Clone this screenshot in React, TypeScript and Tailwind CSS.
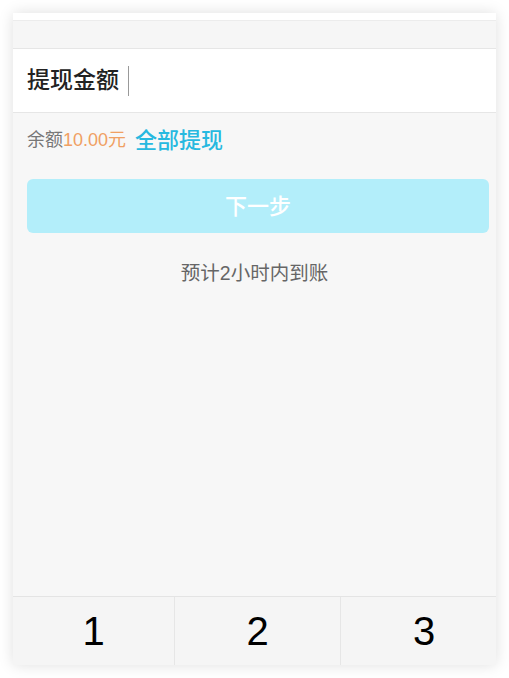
import React from 'react'

const font = { fontFamily: '"Liberation Sans", "Noto Sans CJK SC", sans-serif' }

function Key({ label, className }: { label: string; className: string }) {
  return (
    <div className={`flex h-full shrink-0 items-center justify-center bg-[#f5f5f5] text-[40px] text-black ${className}`}>
      {label}
    </div>
  )
}

export default function App() {
  return (
    <div className="h-[678px] w-full bg-white pl-[13px] pt-[13px]" style={font}>
      <div className="flex h-[652px] w-[483px] flex-col overflow-hidden bg-[#f7f7f7] shadow-[0_0_14px_rgba(0,0,0,0.13)]">
        <div className="h-[7px] bg-white" />
        <div className="h-[28px] border-t border-[#ececec] bg-[#f6f6f6]" />
        <div className="flex h-[65px] items-center border-y border-[#e6e6e6] bg-white px-[14px]">
          <span className="text-[23px] font-medium text-[#222]">提现金额</span>
          <span className="ml-[9px] h-[30px] w-px bg-[#999]" />
        </div>

        <div className="flex h-[54px] items-center px-[14px]">
          <span className="text-[18px] text-[#777]">余额</span>
          <span className="text-[18px] text-[#f0a063]">10.00元</span>
          <span className="ml-[9px] text-[22px] font-medium text-[#27b9e0]">全部提现</span>
        </div>

        <button className="ml-[14px] mr-[7px] mt-[12px] flex h-[54px] items-center justify-center rounded-[6px] bg-[#b3eefa] text-[22px] font-medium text-white">
          下一步
        </button>

        <p className="mt-[28px] text-center text-[19.5px] leading-[24px] text-[#666]">预计2小时内到账</p>

        <div className="flex-1" />

        <div className="flex h-[69px] border-t border-[#e4e4e4]">
          <Key label="1" className="w-[162px] border-r border-[#e6e6e6]" />
          <Key label="2" className="w-[166px] border-r border-[#e6e6e6]" />
          <Key label="3" className="w-[166px]" />
        </div>
      </div>
    </div>
  )
}
